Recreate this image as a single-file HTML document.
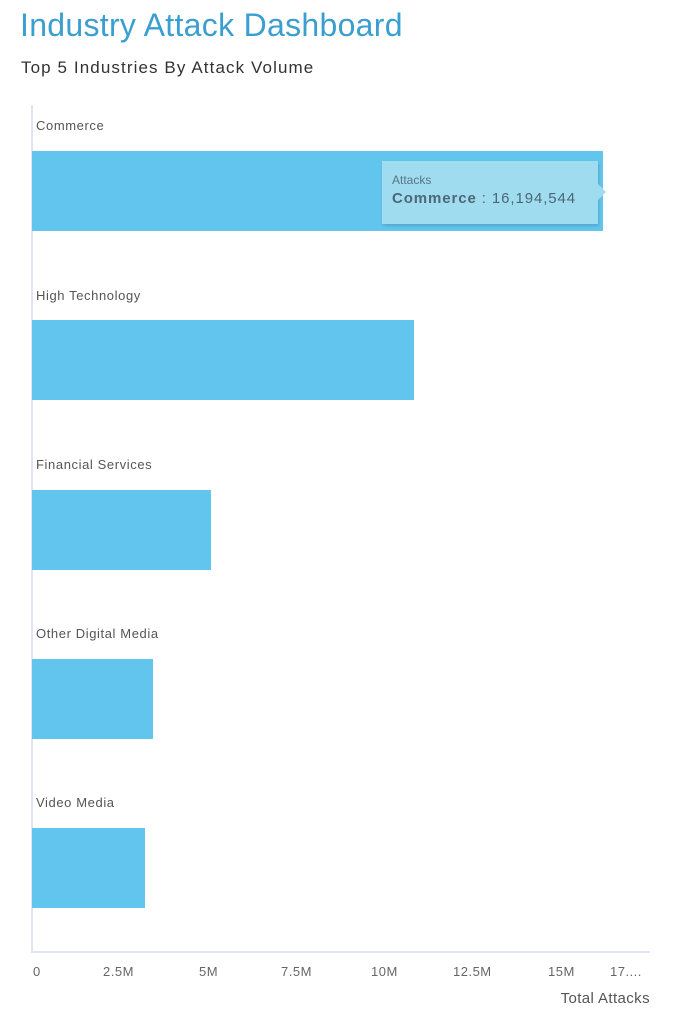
<!DOCTYPE html>
<html><head><style>
body{margin:0;width:700px;height:1016px;background:#fff;font-family:"Liberation Sans",sans-serif;position:relative;overflow:hidden}
div,span{position:absolute;white-space:nowrap}
.bar{left:32px;height:80px;background:#62c5ee}
.lab{left:36px;font-size:13px;color:#555;letter-spacing:0.6px}
.t{top:964px;font-size:13px;color:#666;letter-spacing:0.5px}
</style></head><body>
<div style="left:20px;top:7px;font-size:32px;color:#3a9fd0;letter-spacing:0.3px">Industry Attack Dashboard</div>
<div style="left:21px;top:58px;font-size:17px;color:#333;letter-spacing:1.1px">Top 5 Industries By Attack Volume</div>
<div style="left:31px;top:105px;width:2px;height:848px;background:#e0e4f2"></div>
<div style="left:32px;top:951px;width:618px;height:2px;background:#e0e4f2"></div>
<div class="lab" style="top:118px">Commerce</div>
<div class="bar" style="top:151px;width:571px"></div>
<div class="lab" style="top:288px">High Technology</div>
<div class="bar" style="top:320px;width:382px"></div>
<div class="lab" style="top:457px">Financial Services</div>
<div class="bar" style="top:490px;width:179px"></div>
<div class="lab" style="top:626px">Other Digital Media</div>
<div class="bar" style="top:659px;width:121px"></div>
<div class="lab" style="top:795px">Video Media</div>
<div class="bar" style="top:828px;width:113px"></div>
<div style="left:382px;top:161px;width:216px;height:63px;background:#9fdcf0;box-shadow:1px 2px 3px rgba(0,0,0,0.15)"></div>
<div style="left:598px;top:184px;width:0;height:0;border-top:8px solid transparent;border-bottom:8px solid transparent;border-left:8px solid #9fdcf0"></div>
<div style="left:392px;top:173px;font-size:12px;color:#5a7585">Attacks</div>
<div style="left:392px;top:190px;font-size:15px;color:#4d6777;letter-spacing:0.9px"><b>Commerce</b> : 16,194,544</div>
<div class="t" style="left:33px">0</div>
<div class="t" style="left:103px">2.5M</div>
<div class="t" style="left:199px">5M</div>
<div class="t" style="left:281px">7.5M</div>
<div class="t" style="left:371px">10M</div>
<div class="t" style="left:453px">12.5M</div>
<div class="t" style="left:548px">15M</div>
<div class="t" style="left:610px">17....</div>
<div style="right:50px;top:990px;font-size:15px;color:#555;letter-spacing:0.4px">Total Attacks</div>
</body></html>
